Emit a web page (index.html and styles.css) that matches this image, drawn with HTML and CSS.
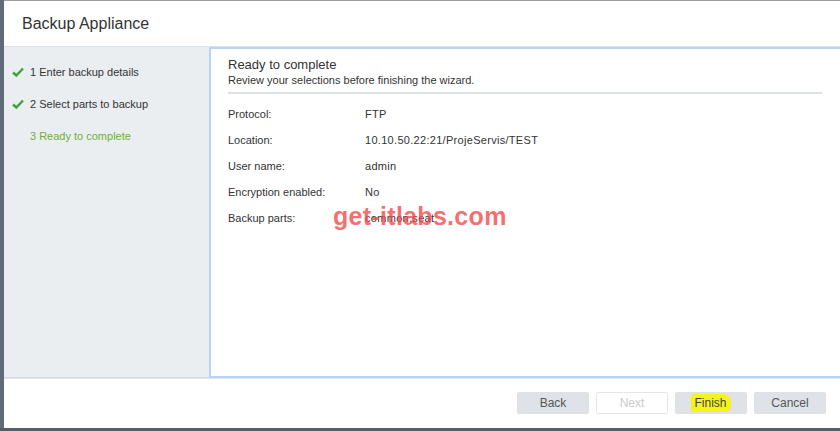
FILE: index.html
```html
<!DOCTYPE html>
<html>
<head>
<meta charset="utf-8">
<link rel="stylesheet" href="styles.css">
</head>
<body>
<div class="dialog">
  <div class="header"><h1 class="title">Backup Appliance</h1></div>
  <div class="main">
    <nav class="nav">
      <div class="step done">
        <svg class="check" viewBox="0 0 12 10" width="12" height="10"><path d="M1 5.5 L4.3 8.5 L11 1.5" fill="none" stroke="#3ca23c" stroke-width="2.4"/></svg>
        <span>1 Enter backup details</span>
      </div>
      <div class="step done">
        <svg class="check" viewBox="0 0 12 10" width="12" height="10"><path d="M1 5.5 L4.3 8.5 L11 1.5" fill="none" stroke="#3ca23c" stroke-width="2.4"/></svg>
        <span>2 Select parts to backup</span>
      </div>
      <div class="step current">
        <span class="nocheck"></span>
        <span>3 Ready to complete</span>
      </div>
    </nav>
    <section class="content">
      <h2 class="heading">Ready to complete</h2>
      <p class="sub">Review your selections before finishing the wizard.</p>
      <div class="rows">
        <div class="row"><span class="label">Protocol:</span><span class="value">FTP</span></div>
        <div class="row"><span class="label">Location:</span><span class="value">10.10.50.22:21/ProjeServis/TEST</span></div>
        <div class="row"><span class="label">User name:</span><span class="value">admin</span></div>
        <div class="row"><span class="label">Encryption enabled:</span><span class="value">No</span></div>
        <div class="row"><span class="label">Backup parts:</span><span class="value">common,seat</span></div>
      </div>
      <div class="watermark">get-itlabs.com</div>
    </section>
  </div>
  <div class="footer">
    <button class="btn">Back</button>
    <button class="btn disabled">Next</button>
    <button class="btn"><span class="marker">Finish</span></button>
    <button class="btn">Cancel</button>
  </div>
</div>
</body>
</html>
```

FILE: styles.css
```css
html, body {
  margin: 0;
  padding: 0;
}
body {
  background: #585e64;
  width: 840px;
  height: 431px;
  overflow: hidden;
  font-family: "Liberation Sans", Arial, sans-serif;
  color: #333;
}
.dialog {
  margin-left: 4px;
  height: 427px;
  background: #fff;
  border-top: 1px solid #9c9c9c;
  display: flex;
  flex-direction: column;
  box-shadow: -4px 0 0 #5f6b78;
}
.header {
  height: 45px;
  border-bottom: 1px solid #dde1e4;
  display: flex;
  align-items: center;
  padding-left: 18px;
  flex: none;
}
.title {
  margin: 0;
  font-weight: normal;
  font-size: 16px;
  color: #333;
}
.main {
  flex: none;
  height: 331px;
  display: flex;
}
.nav {
  width: 205px;
  background: #eaeef1;
  border-bottom: 1px solid #d6dadd;
  padding-top: 9px;
  box-sizing: border-box;
}
.step {
  height: 32px;
  display: flex;
  align-items: center;
  font-size: 11px;
  color: #333;
}
.check, .nocheck {
  width: 12px;
  height: 10px;
  margin-left: 8px;
  margin-right: 6px;
  flex: none;
}
.step.current {
  color: #6fae3c;
}
.content {
  flex: 1;
  position: relative;
  border: 2px solid #b7d4f4;
  border-right: none;
  padding: 8px 18px 0 17px;
}
.heading {
  margin: 0;
  font-weight: normal;
  font-size: 13px;
  color: #333;
  line-height: 16px;
}
.sub {
  margin: 0;
  font-size: 11px;
  line-height: 14px;
  color: #333;
  padding-bottom: 5px;
  border-bottom: 2px solid #dfe2e5;
}
.rows {
  padding-top: 7px;
}
.row {
  display: flex;
  height: 26px;
  align-items: center;
  font-size: 11px;
  color: #333;
}
.label {
  width: 137px;
}
.value {
  letter-spacing: 0.3px;
}
.watermark {
  position: absolute;
  left: 122px;
  top: 153px;
  font-size: 25px;
  font-weight: bold;
  color: rgba(240, 72, 72, 0.78);
  letter-spacing: 0.3px;
}
.footer {
  flex: 1;
  display: flex;
  justify-content: flex-end;
  align-items: flex-start;
  padding-top: 13px;
  padding-right: 14px;
  gap: 7px;
  border-top: 1px solid #e2e5e8;
}
.btn {
  width: 72px;
  height: 22px;
  border: 1px solid #dde1e5;
  background: #dfe3e7;
  border-radius: 2px;
  font-family: "Liberation Sans", Arial, sans-serif;
  font-size: 12px;
  color: #555;
  padding: 0;
}
.btn.disabled {
  background: #fff;
  color: #ccc;
  border-color: #e6e6e6;
}
.marker {
  background: #f4f418;
  padding: 2px 4px 2px 3px;
  border-radius: 3px 8px 6px 3px;
  color: #444;
}
```
